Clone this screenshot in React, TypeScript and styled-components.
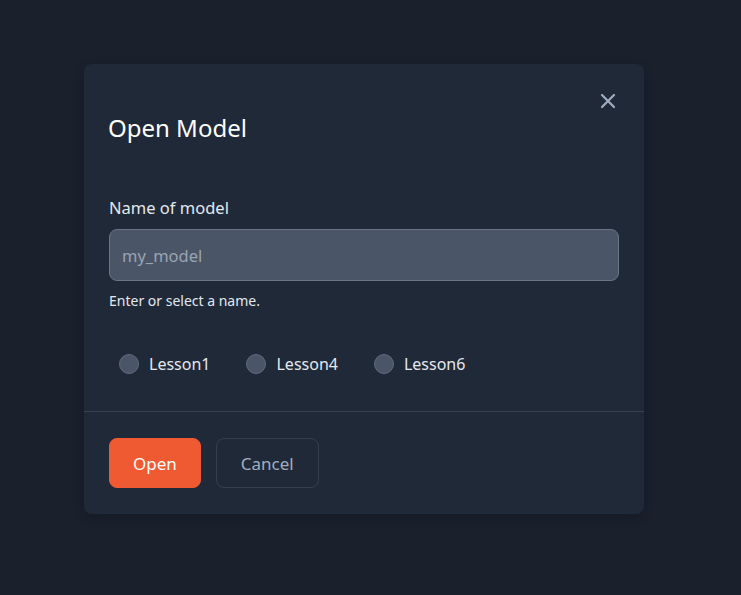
import { createGlobalStyle } from 'styled-components';
import styled from 'styled-components';

const GlobalStyle = createGlobalStyle`
  html, body {
    margin: 0;
    padding: 0;
    background: #1a202c;
  }
  body {
    font-family: 'Noto Sans', 'Open Sans', sans-serif;
    color: #e2e8f0;
  }
`;

const lessons = ['Lesson1', 'Lesson4', 'Lesson6'];

export default function App() {
  return (
    <>
      <GlobalStyle />
      <Page>
        <Modal>
          <Header>
            <Title>Open Model</Title>
            <CloseButton aria-label='Close'>
              <svg width='16' height='16' viewBox='0 0 16 16'>
                <path d='M2 2 L14 14 M14 2 L2 14' stroke='currentColor' strokeWidth='2.2' strokeLinecap='round' />
              </svg>
            </CloseButton>
          </Header>
          <Body>
            <Label>Name of model</Label>
            <Input placeholder='my_model' />
            <Helper>Enter or select a name.</Helper>
            <RadioGroup>
              {lessons.map(name => (
                <RadioItem key={name}>
                  <RadioCircle />
                  {name}
                </RadioItem>
              ))}
            </RadioGroup>
          </Body>
          <Footer>
            <Button primary>Open</Button>
            <Button>Cancel</Button>
          </Footer>
        </Modal>
      </Page>
    </>
  );
}

const Page = styled.div`
  min-height: 595px;
  box-sizing: border-box;
  padding: 64px 0 0 84px;
`;

const Modal = styled.div`
  width: 560px;
  background: #202937;
  border-radius: 8px;
  box-shadow: 0 4px 12px rgba(0, 0, 0, 0.15);
  position: relative;
`;

const Header = styled.div`
  padding: 48px 24px 0;
`;

const Title = styled.h2`
  margin: 0;
  font-size: 24px;
  line-height: 32px;
  font-weight: 400;
  color: #ffffff;
`;

const CloseButton = styled.button`
  position: absolute;
  top: 21px;
  right: 20px;
  width: 32px;
  height: 32px;
  border: none;
  background: transparent;
  color: #a0aec0;
  display: flex;
  align-items: center;
  justify-content: center;
  padding: 0;
  cursor: pointer;
`;

const Body = styled.div`
  padding: 52px 24px 35px 25px;
  display: flex;
  flex-direction: column;
`;

const Label = styled.label`
  font-size: 16.5px;
  line-height: 24px;
  color: #e2e8f0;
  margin-bottom: 9px;
`;

const Input = styled.input`
  box-sizing: border-box;
  width: 510px;
  height: 52px;
  border-radius: 8px;
  border: 1px solid #6b7483;
  background: #4a5568;
  padding: 0 12px;
  font-family: inherit;
  font-size: 16.5px;
  color: #e2e8f0;
  outline: none;

  &::placeholder {
    color: #9ba4b2;
  }
`;

const Helper = styled.div`
  margin-top: 10px;
  font-size: 14px;
  line-height: 20px;
  color: #e2e8f0;
`;

const RadioGroup = styled.div`
  margin-top: 41px;
  padding-left: 10px;
  display: flex;
  gap: 36px;
`;

const RadioItem = styled.label`
  display: flex;
  align-items: center;
  gap: 10px;
  font-size: 16px;
  line-height: 24px;
  color: #e2e8f0;
`;

const RadioCircle = styled.span`
  box-sizing: border-box;
  width: 20px;
  height: 20px;
  border-radius: 50%;
  background: #4a5568;
  border: 1px solid #5f6a7b;
`;

const Footer = styled.div`
  border-top: 1px solid #364152;
  padding: 26px 24px 26px 25px;
  display: flex;
  gap: 15px;
`;

const Button = styled.button<{ primary?: boolean }>`
  box-sizing: border-box;
  height: 50px;
  padding: 0 ${p => (p.primary ? 23 : 24)}px;
  border-radius: 8px;
  font-family: inherit;
  font-size: 17px;
  border: 1px solid ${p => (p.primary ? '#f05a32' : '#373f4d')};
  background: ${p => (p.primary ? '#f05a32' : 'transparent')};
  color: ${p => (p.primary ? '#ffffff' : '#a0aec0')};
  cursor: pointer;
`;
